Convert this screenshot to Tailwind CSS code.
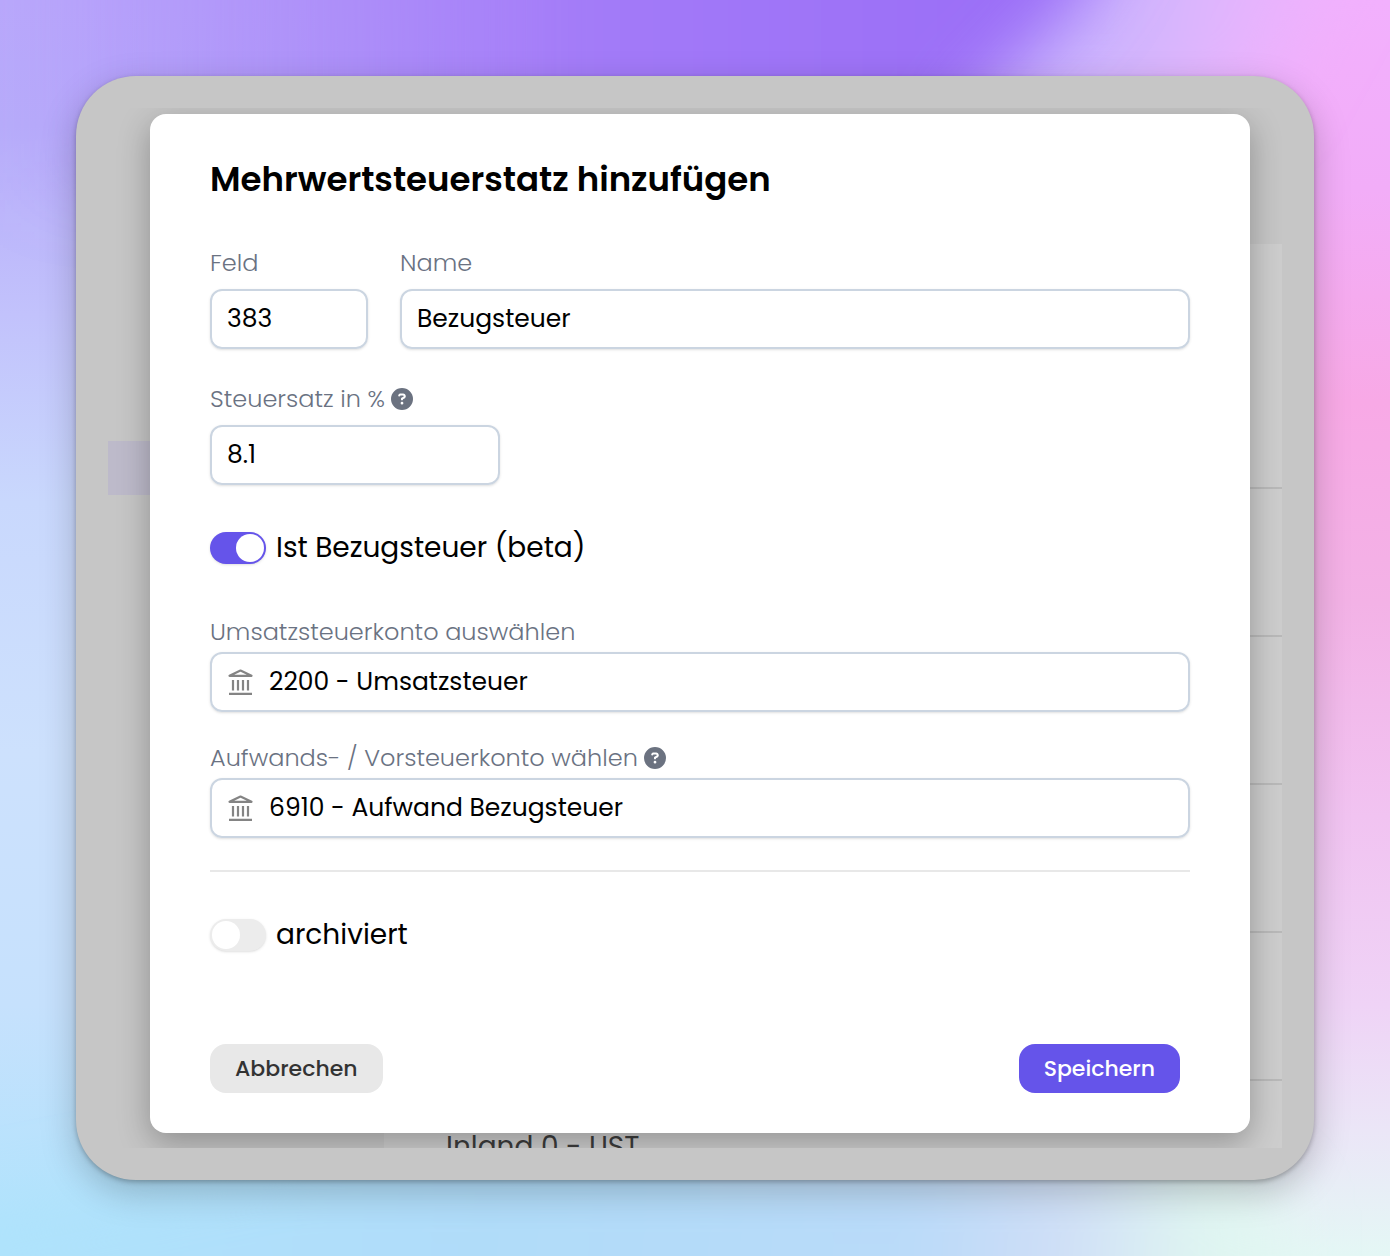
<!DOCTYPE html>
<html lang="de">
<head>
    <meta charset="UTF-8">
    <meta name="viewport" content="width=device-width, initial-scale=1.0">
    <script src="https://cdn.jsdelivr.net/npm/@tailwindcss/browser@4"></script>
    <title>Mehrwertsteuersatz</title>
</head>
<body class="relative isolate min-h-screen overflow-x-hidden p-[76px] font-[Poppins,Inter,sans-serif] text-black">
    <!-- backdrop -->
    <svg class="absolute inset-0 -z-10 h-full w-full" viewBox="0 0 1390 1256" preserveAspectRatio="none" aria-hidden="true">
        <defs>
            <linearGradient id="left" x1="0" y1="0" x2="0" y2="1">
                <stop offset="0" stop-color="#b9a8fb" />
                <stop offset=".1" stop-color="#b7acfa" />
                <stop offset=".25" stop-color="#c2c2fc" />
                <stop offset=".4" stop-color="#c9d8fd" />
                <stop offset=".6" stop-color="#cde1fd" />
                <stop offset=".8" stop-color="#c6e1fd" />
                <stop offset="1" stop-color="#afe3fc" />
            </linearGradient>
            <linearGradient id="right" x1="0" y1="0" x2="0" y2="1">
                <stop offset="0" stop-color="#f2b0fd" />
                <stop offset=".15" stop-color="#f2adf8" />
                <stop offset=".32" stop-color="#f8a9e6" />
                <stop offset=".48" stop-color="#f3b2e6" />
                <stop offset=".65" stop-color="#f1c3f1" />
                <stop offset=".8" stop-color="#efd3f6" />
                <stop offset=".9" stop-color="#ebe6f7" />
                <stop offset="1" stop-color="#e4f7f5" />
            </linearGradient>
            <linearGradient id="top" x1="0" y1="0" x2="1" y2="0">
                <stop offset="0" stop-color="#a880f8" stop-opacity="0" />
                <stop offset=".5" stop-color="#a37bf8" />
                <stop offset="1" stop-color="#986af7" />
            </linearGradient>
            <linearGradient id="lavender" gradientUnits="userSpaceOnUse" x1="1080" y1="0" x2="1370" y2="60">
                <stop offset="0" stop-color="#c9b4fe" />
                <stop offset=".25" stop-color="#d3b6fd" />
                <stop offset=".6" stop-color="#e8b4fd" />
                <stop offset="1" stop-color="#f2b0fd" />
            </linearGradient>
            <linearGradient id="bottom" gradientUnits="userSpaceOnUse" x1="0" y1="1256" x2="1200" y2="1330">
                <stop offset="0" stop-color="#afe3fc" />
                <stop offset=".4" stop-color="#b0dcf9" />
                <stop offset=".75" stop-color="#b9daf9" />
                <stop offset=".88" stop-color="#cfdef7" />
                <stop offset="1" stop-color="#e0f6f1" />
            </linearGradient>
            <filter id="soft" x="-50%" y="-50%" width="200%" height="200%">
                <feGaussianBlur stdDeviation="34" />
            </filter>
        </defs>
        <rect width="1390" height="1256" fill="url(#left)" />
        <rect x="700" y="0" width="690" height="1256" fill="url(#right)" />
        <g filter="url(#soft)">
            <polygon points="-100,1230 300,1150 1210,1150 1280,1210 1280,1400 -100,1400" fill="url(#bottom)" />
            <polygon points="500,-150 1400,-150 1260,110 500,140" fill="url(#lavender)" />
        </g>
        <g filter="url(#soft)">
            <polygon points="0,-120 1150,-120 1080,0 970,110 920,200 0,200" fill="url(#top)" />
        </g>
    </svg>

    <div class="rounded-[60px] bg-[#c6c6c6] p-8 shadow-[0_12px_36px_rgba(0,0,0,0.22),0_2px_5px_rgba(0,0,0,0.25)]">
        <div class="relative isolate overflow-hidden pt-[6px] pr-8 pb-[15px] pl-[42px]">
            <!-- dimmed page behind the dialog -->
            <div class="absolute inset-0 -z-10 flex pt-[136px]" aria-hidden="true">
                <div class="w-[276px] pt-[197px]">
                    <div class="h-[54px] bg-[#bdbaca]"></div>
                </div>
                <div class="flex grow flex-col bg-[#cdcdcd]">
                    <div class="h-[245px] shrink-0 border-b-2 border-[#b9b9b9]"></div>
                    <div class="h-[148px] shrink-0 border-b-2 border-[#b9b9b9]"></div>
                    <div class="h-[148px] shrink-0 border-b-2 border-[#b9b9b9]"></div>
                    <div class="h-[148px] shrink-0 border-b-2 border-[#b9b9b9]"></div>
                    <div class="h-[148px] shrink-0 border-b-2 border-[#b9b9b9]"></div>
                    <div class="px-[62px] pt-[45px] text-[28px] leading-[42px] text-[#3c3c3c]">Inland 0 - UST</div>
                </div>
            </div>

            <div role="dialog" aria-labelledby="title" class="rounded-2xl bg-white px-[60px] py-10 shadow-[0_10px_32px_rgba(0,0,0,0.28)]">
                <h1 id="title" class="text-[34px] leading-[51px] font-semibold">Mehrwertsteuerstatz hinzufügen</h1>

                <form>
                    <div class="mt-10 flex gap-8">
                        <div class="w-[158px]">
                            <label for="feld" class="block text-[24px] leading-9 font-light text-gray-500">Feld</label>
                            <input id="feld" type="text" value="383" class="mt-2 h-[60px] w-full rounded-xl border-2 border-[#cbd5e1] px-[15px] text-[25px] shadow-sm">
                        </div>
                        <div class="grow">
                            <label for="name" class="block text-[24px] leading-9 font-light text-gray-500">Name</label>
                            <input id="name" type="text" value="Bezugsteuer" class="mt-2 h-[60px] w-full rounded-xl border-2 border-[#cbd5e1] px-[15px] text-[25px] shadow-sm">
                        </div>
                    </div>

                    <div class="mt-8">
                        <div class="flex items-center gap-[6px]">
                            <label for="satz" class="text-[24px] leading-9 font-light text-gray-500">Steuersatz in %</label>
                            <svg class="size-[22px]" viewBox="0 0 512 512" fill="#6b7280"><path d="M256 512A256 256 0 1 0 256 0a256 256 0 1 0 0 512zM169.8 165.3c7.900-22.300 29.100-37.300 52.800-37.300h58.300c34.900 0 63.100 28.300 63.100 63.100c0 22.600-12.100 43.500-31.700 54.800L280 264.400c-.2 13-10.900 23.600-24 23.600c-13.300 0-24-10.700-24-24V250.500c0-8.600 4.600-16.500 12.100-20.800l44.300-25.400c4.700-2.700 7.600-7.700 7.600-13.100c0-8.400-6.800-15.100-15.100-15.100H222.600c-3.400 0-6.400 2.100-7.500 5.300l-.4 1.200c-4.400 12.500-18.200 19-30.600 14.600s-19-18.200-14.600-30.600l.3-1.300zM224 352a32 32 0 1 1 64 0 32 32 0 1 1 -64 0z" /></svg>
                        </div>
                        <input id="satz" type="text" value="8.1" class="mt-2 h-[60px] w-[290px] rounded-xl border-2 border-[#cbd5e1] px-[15px] text-[25px] shadow-sm">
                    </div>

                    <label class="mt-10 flex items-center gap-[10px] text-[28px] leading-[45px]">
                        <input type="checkbox" role="switch" checked class="h-8 w-14 appearance-none rounded-full bg-[#ececec] shadow-sm before:m-[2px] before:block before:size-7 before:rounded-full before:bg-white checked:bg-[#6554ea] checked:before:ml-[26px]">
                        Ist Bezugsteuer (beta)
                    </label>

                    <div class="mt-11">
                        <label for="umsatz" class="block text-[24px] leading-9 font-light text-gray-500">Umsatzsteuerkonto auswählen</label>
                        <div class="mt-[2px] flex h-[60px] items-center gap-4 rounded-xl border-2 border-[#cbd5e1] px-4 shadow-sm">
                            <svg class="h-[26px] w-[25px] shrink-0" viewBox="0 0 25 26" fill="none" stroke="#848484" stroke-width="2.2"><path d="M1.500 6.800 12.500 1.500 23.500 6.800Z" stroke-linejoin="round" /><path d="M5 11v10.500M10 11v10.500M15 11v10.500M20 11v10.500M1 24.800h23" /></svg>
                            <input id="umsatz" type="text" value="2200 - Umsatzsteuer" class="min-w-0 grow text-[25px] outline-none">
                        </div>
                    </div>

                    <div class="mt-7">
                        <div class="flex items-center gap-[6px]">
                            <label for="aufwand" class="text-[24px] leading-9 font-light text-gray-500">Aufwands- / Vorsteuerkonto wählen</label>
                            <svg class="size-[22px]" viewBox="0 0 512 512" fill="#6b7280"><path d="M256 512A256 256 0 1 0 256 0a256 256 0 1 0 0 512zM169.8 165.3c7.900-22.300 29.100-37.300 52.800-37.300h58.300c34.900 0 63.100 28.300 63.100 63.100c0 22.600-12.100 43.500-31.700 54.800L280 264.400c-.2 13-10.900 23.600-24 23.600c-13.300 0-24-10.700-24-24V250.500c0-8.600 4.600-16.500 12.100-20.800l44.300-25.400c4.700-2.700 7.600-7.700 7.600-13.100c0-8.400-6.800-15.100-15.100-15.100H222.600c-3.400 0-6.400 2.100-7.500 5.300l-.4 1.200c-4.400 12.500-18.200 19-30.600 14.600s-19-18.200-14.600-30.600l.3-1.300zM224 352a32 32 0 1 1 64 0 32 32 0 1 1 -64 0z" /></svg>
                        </div>
                        <div class="mt-[2px] flex h-[60px] items-center gap-4 rounded-xl border-2 border-[#cbd5e1] px-4 shadow-sm">
                            <svg class="h-[26px] w-[25px] shrink-0" viewBox="0 0 25 26" fill="none" stroke="#848484" stroke-width="2.2"><path d="M1.500 6.800 12.500 1.500 23.500 6.800Z" stroke-linejoin="round" /><path d="M5 11v10.500M10 11v10.500M15 11v10.500M20 11v10.500M1 24.800h23" /></svg>
                            <input id="aufwand" type="text" value="6910 - Aufwand Bezugsteuer" class="min-w-0 grow text-[25px] outline-none">
                        </div>
                    </div>

                    <hr class="mt-8 border-t-2 border-[#e8e8e8]">

                    <label class="mt-10 flex items-center gap-[10px] text-[28px] leading-[45px]">
                        <input type="checkbox" role="switch" class="h-8 w-14 appearance-none rounded-full bg-[#ececec] shadow-sm before:m-[2px] before:block before:size-7 before:rounded-full before:bg-white checked:bg-[#6554ea] checked:before:ml-[26px]">
                        archiviert
                    </label>

                    <div class="mt-[87px] flex justify-between pr-[10px]">
                        <button type="button" class="h-[49px] rounded-2xl bg-[#e8e8e8] px-[25px] text-[22px] font-medium text-[#333]">Abbrechen</button>
                        <button type="submit" class="h-[49px] rounded-2xl bg-[#6554ea] px-[25px] text-[22px] font-medium text-white">Speichern</button>
                    </div>
                </form>
            </div>
        </div>
    </div>
</body>
</html>
